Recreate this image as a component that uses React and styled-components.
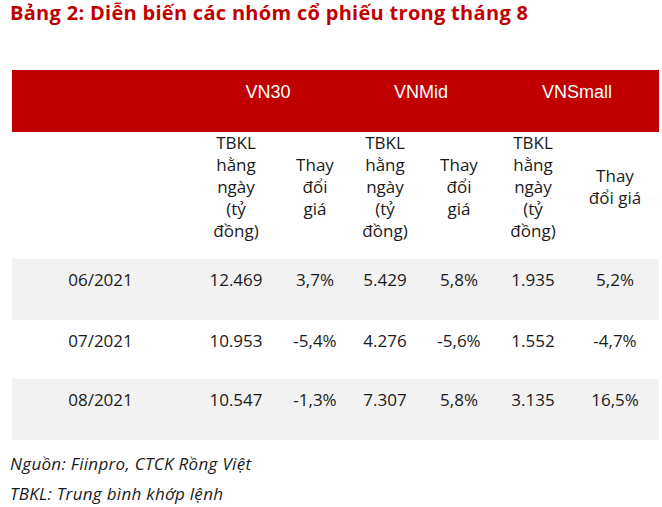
import React from "react";
import styled, { createGlobalStyle } from "styled-components";

const Global = createGlobalStyle`
  html, body { margin: 0; padding: 0; background: #ffffff; }
  body { font-family: "Open Sans", "Noto Sans", sans-serif; color: #1a1a1a; }
`;

const COLS = "177px 94px 64px 76px 72px 76px 88px";

const Page = styled.div`
  width: 662px;
  height: 507px;
  overflow: hidden;
  box-sizing: border-box;
`;

const Title = styled.h1`
  margin: 0 0 0 10px;
  font-family: "Open Sans", sans-serif;
  font-weight: 700;
  font-size: 20px;
  line-height: 26px;
  color: #c00000;
  letter-spacing: 0.3px;
`;

const Table = styled.div`
  margin: 44px 0 0 12px;
  width: 647px;
  display: flex;
  flex-direction: column;
`;

const Row = styled.div`
  display: grid;
  grid-template-columns: ${COLS};
  background: ${(p) => p.$bg || "transparent"};
  height: ${(p) => p.$h}px;
`;

const GroupCell = styled.div`
  grid-column: span ${(p) => p.$span || 1};
  font-family: "Liberation Sans", Arial, sans-serif;
  font-size: 18px;
  line-height: 22px;
  color: #ffffff;
  text-align: center;
  padding-top: 11px;
`;

const SubRow = styled(Row)`
  padding-bottom: 22px;
  box-sizing: border-box;
`;

const SubCell = styled.div`
  display: flex;
  align-items: center;
  justify-content: center;
  text-align: center;
  font-size: 17px;
  line-height: 22px;
  color: #1a1a1a;
`;

const DataCell = styled.div`
  text-align: center;
  font-size: 17px;
  line-height: 22px;
  padding-top: 10px;
  color: #1a1a1a;
`;

const Notes = styled.div`
  margin: 9px 0 0 10px;
  font-family: "Open Sans", sans-serif;
  font-style: italic;
  font-size: 17px;
  line-height: 30px;
  color: #1a1a1a;
  letter-spacing: 0.3px;
`;

const rows = [
  ["06/2021", "12.469", "3,7%", "5.429", "5,8%", "1.935", "5,2%"],
  ["07/2021", "10.953", "-5,4%", "4.276", "-5,6%", "1.552", "-4,7%"],
  ["08/2021", "10.547", "-1,3%", "7.307", "5,8%", "3.135", "16,5%"],
];

const Lines = ({ lines }) => (
  <SubCell>
    <span>
      {lines.map((l, i) => (
        <React.Fragment key={i}>
          {i > 0 && <br />}
          {l}
        </React.Fragment>
      ))}
    </span>
  </SubCell>
);

const TBKL = ["TBKL", "hằng", "ngày", "(tỷ", "đồng)"];

export default function App() {
  return (
    <>
      <Global />
      <Page>
        <Title>Bảng 2: Diễn biến các nhóm cổ phiếu trong tháng 8</Title>
        <Table>
          <Row $bg="#c00000" $h={62}>
            <GroupCell />
            <GroupCell $span={2}>VN30</GroupCell>
            <GroupCell $span={2}>VNMid</GroupCell>
            <GroupCell $span={2}>VNSmall</GroupCell>
          </Row>
          <SubRow $h={127}>
            <SubCell />
            <Lines lines={TBKL} />
            <Lines lines={["Thay", "đổi", "giá"]} />
            <Lines lines={TBKL} />
            <Lines lines={["Thay", "đổi", "giá"]} />
            <Lines lines={TBKL} />
            <Lines lines={["Thay", "đổi giá"]} />
          </SubRow>
          {rows.map((r, i) => (
            <Row key={r[0]} $h={i === 1 ? 59 : 61} $bg={i % 2 === 0 ? "#f2f2f2" : "#ffffff"}>
              {r.map((v, j) => (
                <DataCell key={j}>{v}</DataCell>
              ))}
            </Row>
          ))}
        </Table>
        <Notes>
          <div>Nguồn: Fiinpro, CTCK Rồng Việt</div>
          <div>TBKL: Trung bình khớp lệnh</div>
        </Notes>
      </Page>
    </>
  );
}
